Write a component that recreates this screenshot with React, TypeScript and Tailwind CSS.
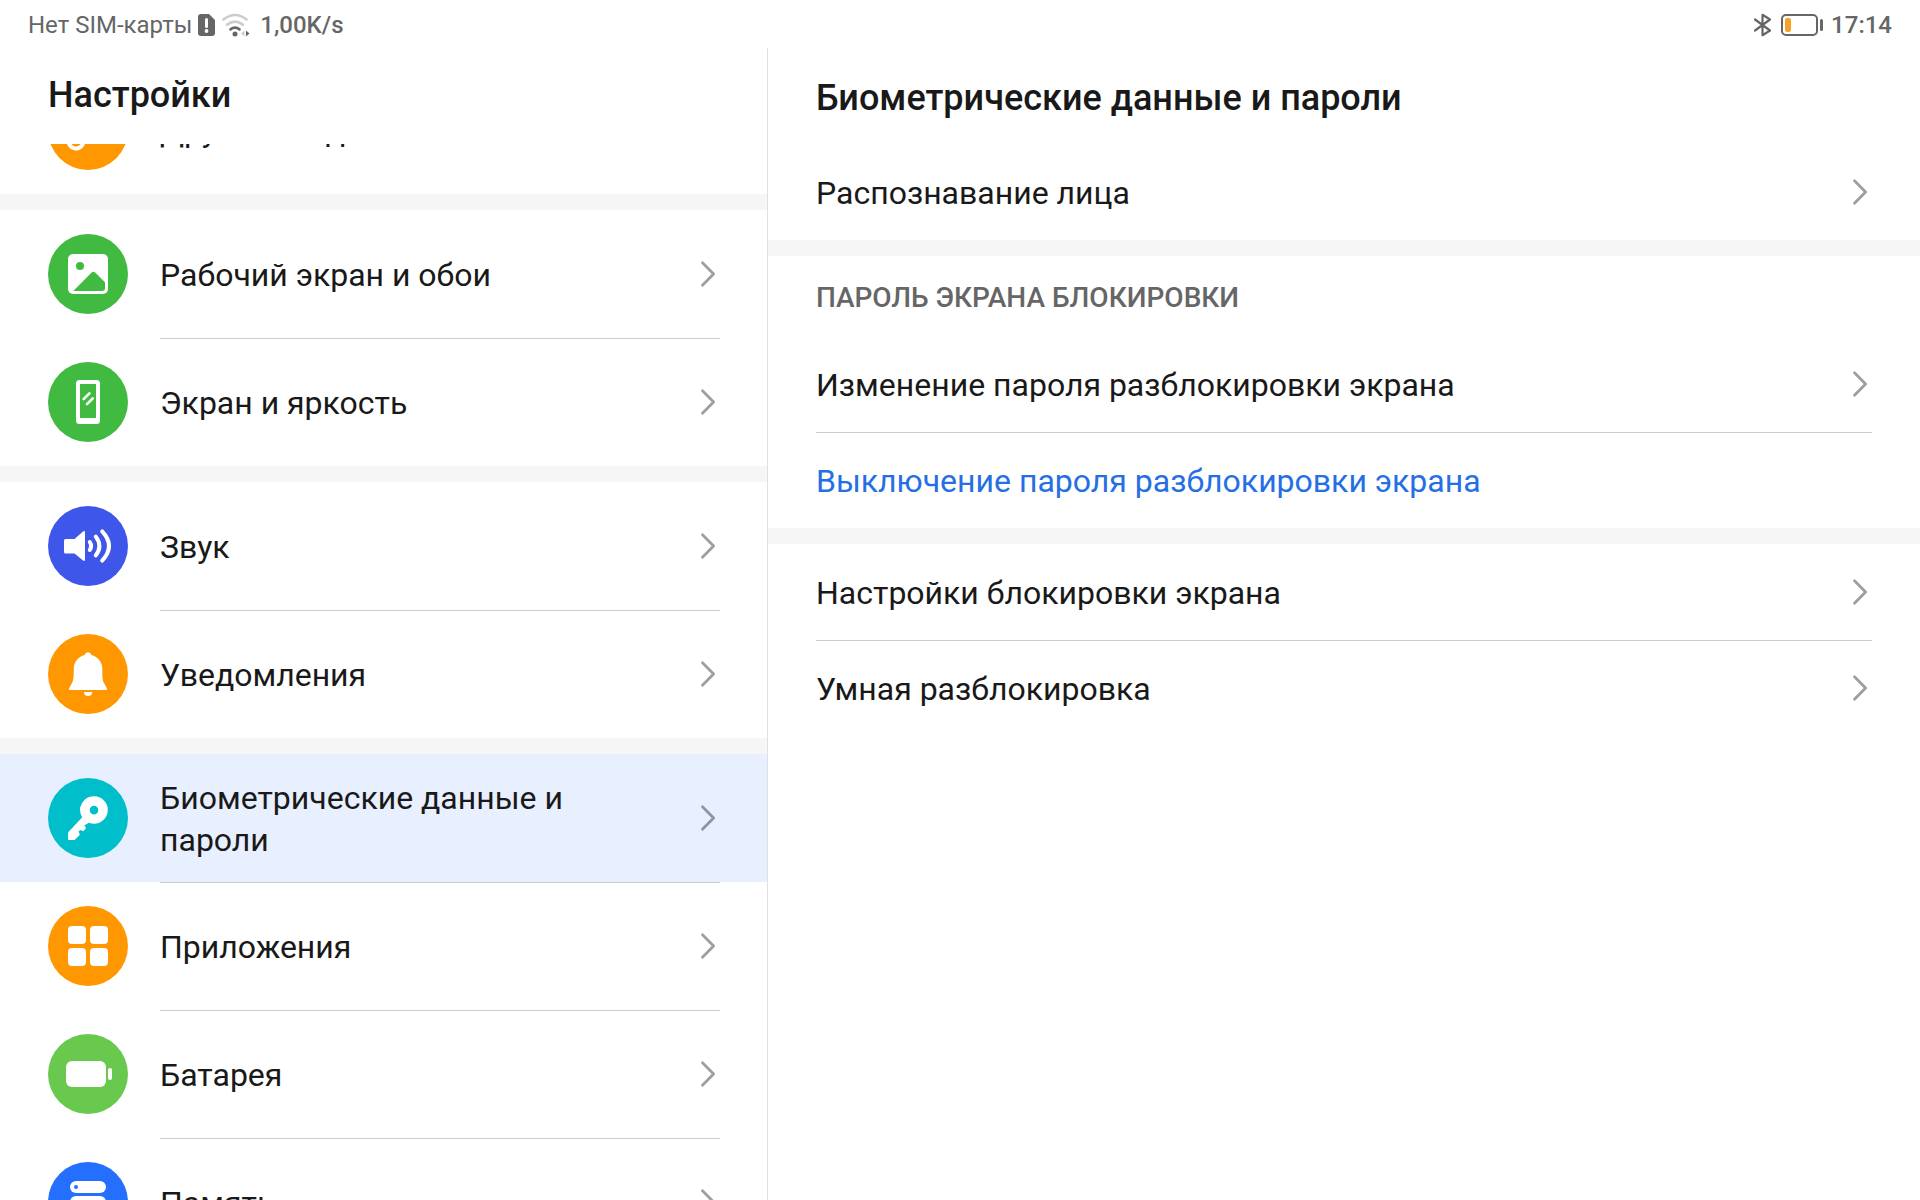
import React, { useLayoutEffect, useRef, useState } from 'react'

type MenuItem = {
  id: string
  title: string
  color: string
  icon: React.ReactNode
}

type DetailItem = {
  title: string
  isLink?: boolean
}

const MoreIcon = () => (
  <g fill="none" stroke="#fff" strokeWidth="4" strokeLinecap="round">
    <rect x="20.5" y="30.5" width="15" height="28" rx="7.5" transform="rotate(12 28 51)" />
    <path d="M42 44l10-10a7.5 7.5 0 0 0-11-11l-6 6" />
  </g>
)

const WallpaperIcon = () => (
  <g>
    <rect x="20" y="20" width="40" height="40" rx="5" fill="#fff" />
    <circle cx="32" cy="32" r="4" fill="#41ba41" />
    <path d="M25.3 57L43.4 38.7q2-1.8 4 0L57 48.3V54q0 3-3 3z" fill="#41ba41" />
  </g>
)

const DisplayIcon = () => (
  <g>
    <path fillRule="evenodd" fill="#fff" d="M31.5 18h17a3.5 3.5 0 0 1 3.5 3.5v37a3.5 3.5 0 0 1-3.5 3.5h-17a3.5 3.5 0 0 1-3.5-3.5v-37a3.5 3.5 0 0 1 3.5-3.5zM32 22v34h16V22z" />
    <path d="M35.6 37.2l5.8-5.8M39 42.2l5.8-5.8" stroke="#fff" strokeWidth="2.6" strokeLinecap="round" />
  </g>
)

const SoundIcon = () => (
  <g>
    <path fill="#fff" d="M17.5 33H26.5L35 25.4q2-1.2 2 1V53.6q0 2.2-2 1L26.5 47.4H17.5q-1.5 0-1.5-1.5V34.5q0-1.5 1.5-1.5z" />
    <g fill="none" stroke="#fff" strokeWidth="4" strokeLinecap="round">
      <path d="M41.8 36q2.600 4 0 8" />
      <path d="M47.8 30.600q7.200 9.400 0 18.800" />
      <path d="M54.200 25.400q13.600 14.600 0 29.200" />
    </g>
  </g>
)

const BellIcon = () => (
  <g fill="#fff">
    <path d="M36.6 20.9a3.5 3.5 0 0 1 6.8 0C50 22.7 54.3 28 54.3 34.5c0 9 .2 11.6 1.7 14.5l3 5.4q.4 1.6-1 1.6H22q-1.4 0-1-1.6l3-5.4c1.5-2.9 1.8-5.5 1.8-14.5C25.8 28 30 22.7 36.6 20.9z" />
    <path d="M36 58h8.2a4.1 4 0 0 1-8.2 0z" />
  </g>
)

const KeyIcon = () => (
  <path
    fill="#fff"
    fillRule="evenodd"
    d="M46 18.3a13.7 13.7 0 1 1-5 26.4L36.3 47.6l1.9 2.4-3 3.2-2.8-1.2-1.8 1.4 1.3 3.4L26.6 62H20.8q-.8 0-.8-.8V54.6L34.2 39.2A13.7 13.7 0 0 1 46 18.3zm0 9.5a4.3 4.3 0 1 0 0 8.6a4.3 4.3 0 1 0 0-8.6z"
  />
)

const AppsIcon = () => (
  <g fill="#fff">
    <rect x="20" y="20" width="18" height="18" rx="4" />
    <rect x="42" y="20" width="18" height="18" rx="4" />
    <rect x="20" y="42" width="18" height="18" rx="4" />
    <rect x="42" y="42" width="18" height="18" rx="4" />
  </g>
)

const BatteryIcon = () => (
  <g fill="#fff">
    <rect x="18" y="27" width="40" height="26" rx="6" />
    <rect x="60" y="34" width="4" height="12" rx="2" />
  </g>
)

const StorageIcon = () => (
  <g fill="#fff">
    <rect x="22" y="19" width="36" height="12" rx="6" />
    <rect x="22" y="34" width="36" height="12" rx="6" />
    <rect x="22" y="49" width="36" height="12" rx="6" />
    <circle cx="28" cy="25" r="2" fill="#256fff" />
    <circle cx="28" cy="40" r="2" fill="#256fff" />
    <circle cx="28" cy="55" r="2" fill="#256fff" />
  </g>
)

const menuGroups: MenuItem[][] = [
  [{ id: 'more', title: 'Другие соединения', color: '#ff9800', icon: <MoreIcon /> }],
  [
    { id: 'wallpaper', title: 'Рабочий экран и обои', color: '#41ba41', icon: <WallpaperIcon /> },
    { id: 'display', title: 'Экран и яркость', color: '#41ba41', icon: <DisplayIcon /> },
  ],
  [
    { id: 'sound', title: 'Звук', color: '#3f56ea', icon: <SoundIcon /> },
    { id: 'notifications', title: 'Уведомления', color: '#ff9800', icon: <BellIcon /> },
  ],
  [
    { id: 'biometrics', title: 'Биометрические данные и пароли', color: '#00bfcb', icon: <KeyIcon /> },
    { id: 'apps', title: 'Приложения', color: '#ff9800', icon: <AppsIcon /> },
    { id: 'battery', title: 'Батарея', color: '#69c94f', icon: <BatteryIcon /> },
    { id: 'storage', title: 'Память', color: '#256fff', icon: <StorageIcon /> },
  ],
]

const Chevron = () => (
  <svg width="24" height="32" viewBox="0 0 24 32" className="shrink-0" aria-hidden="true">
    <path d="M6.5 3.8L17.6 15L6.5 26.2" fill="none" stroke="#000" strokeOpacity="0.38" strokeWidth="2.8" strokeLinecap="round" strokeLinejoin="round" />
  </svg>
)

const StatusBar = () => {
  return (
    <header className="flex h-12 shrink-0 items-center justify-between px-7 pt-px text-2xl text-[#666666]">
      <div className="flex items-center">
        <span>Нет SIM-карты</span>
        <svg width="18" height="24" viewBox="0 0 18 24" className="ml-1.5" aria-hidden="true">
          <path d="M3 1h8l6 6v13a3 3 0 0 1-3 3H3a3 3 0 0 1-3-3V4a3 3 0 0 1 3-3z" fill="#666" />
          <path d="M8.5 6.5v7" stroke="#fff" strokeWidth="3" strokeLinecap="round" />
          <circle cx="8.5" cy="18" r="1.9" fill="#fff" />
        </svg>
        <svg width="28" height="24" viewBox="0 0 28 24" className="ml-1.5" aria-hidden="true">
          <g fill="none" strokeWidth="2.6" strokeLinecap="round">
            <path d="M1.5 6.5Q13 -2.5 24.5 6.5" stroke="#ccc" />
            <path d="M5 11.7Q13 5.5 21 11.7" stroke="#ccc" />
            <path d="M8.5 16.4Q13 13 17.5 16.4" stroke="#666" />
          </g>
          <circle cx="13" cy="21" r="2.5" fill="#666" />
          <path d="M22.5 17.5v6l-3.500-3z" fill="#ccc" />
          <path d="M24 17.5v6l3.500-3z" fill="#666" />
        </svg>
        <span className="ml-2.5 font-medium">1,00K/s</span>
      </div>
      <div className="flex items-center">
        <svg width="20" height="24" viewBox="0 0 20 24" className="mr-2" aria-hidden="true">
          <path d="M2 6.5L17 17.5L9.5 22.2V1.8L17 6.5L2 17.5" fill="none" stroke="#666" strokeWidth="2.2" strokeLinecap="round" strokeLinejoin="round" />
        </svg>
        <svg width="42" height="24" viewBox="0 0 42 24" className="mr-2" aria-hidden="true">
          <rect x="1" y="2" width="35" height="20" rx="4" fill="none" stroke="#666" strokeWidth="2" />
          <rect x="4" y="5" width="6" height="14" rx="2" fill="#f9a22b" />
          <rect x="39" y="6" width="3" height="12" rx="1.5" fill="#666" />
        </svg>
        <span className="font-medium">17:14</span>
      </div>
    </header>
  )
}

const MenuRow = ({ item, first, selected, onSelect }: { item: MenuItem, first: boolean, selected: boolean, onSelect: () => void }) => {
  return (
    <button
      type="button"
      onClick={onSelect}
      className={`flex h-32 w-full items-center gap-8 pr-[47px] pl-12 text-left ${selected ? 'bg-[#e8efff]' : ''}`}
    >
      <svg width="80" height="80" viewBox="0 0 80 80" className="shrink-0" aria-hidden="true">
        <circle cx="40" cy="40" r="40" fill={item.color} />
        {item.icon}
      </svg>
      <span className={`flex h-full flex-1 items-center justify-between border-t ${first ? 'border-transparent' : 'border-[#cccccc]'}`}>
        <span className="max-w-110 text-[32px] leading-[42px]">{item.title}</span>
        <Chevron />
      </span>
    </button>
  )
}

const Sidebar = () => {
  const listRef = useRef<HTMLElement>(null)
  const [current, setCurrent] = useState('biometrics')

  useLayoutEffect(() => {
    if (listRef.current) {
      listRef.current.scrollTop = 78
    }
  }, [])

  return (
    <aside className="flex w-2/5 flex-col border-r border-[#e0e0e0]">
      <h1 className="flex h-24 shrink-0 items-center px-12 pb-0.5 text-4xl font-medium">Настройки</h1>
      <nav ref={listRef} className="min-h-0 flex-1 overflow-y-auto [scrollbar-width:none]">
        {menuGroups.map((group, index) => (
          <div key={index} className={index > 0 ? 'border-t-16 border-[#f6f6f6]' : ''}>
            {group.map((item, i) => (
              <MenuRow
                key={item.id}
                item={item}
                first={i === 0}
                selected={current === item.id}
                onSelect={() => setCurrent(item.id)}
              />
            ))}
          </div>
        ))}
      </nav>
    </aside>
  )
}

const DetailGroup = ({ heading, items }: { heading?: string, items: DetailItem[] }) => {
  return (
    <section className="border-b-16 border-[#f6f6f6] px-12 last:border-b-0">
      {heading && (
        <h3 className="flex h-20 items-center pt-1 text-[28px] font-medium text-[#666666]">{heading}</h3>
      )}
      {items.map((item, i) => (
        <button
          type="button"
          key={item.title}
          className={`flex h-24 w-full items-center justify-between border-t text-left text-[32px] ${i === 0 ? 'border-transparent' : 'border-[#cccccc]'} ${item.isLink ? 'text-[#256fe5]' : ''}`}
        >
          <span>{item.title}</span>
          {!item.isLink && <Chevron />}
        </button>
      ))}
    </section>
  )
}

const App = () => {
  return (
    <div className="flex h-screen flex-col overflow-hidden bg-white font-['Roboto',sans-serif] text-[#191919]">
      <StatusBar />
      <div className="flex min-h-0 flex-1">
        <Sidebar />
        <main className="flex-1 overflow-y-auto">
          <h2 className="flex h-24 items-center px-12 pt-1 text-4xl font-medium">Биометрические данные и пароли</h2>
          <DetailGroup items={[{ title: 'Распознавание лица' }]} />
          <DetailGroup
            heading="ПАРОЛЬ ЭКРАНА БЛОКИРОВКИ"
            items={[
              { title: 'Изменение пароля разблокировки экрана' },
              { title: 'Выключение пароля разблокировки экрана', isLink: true },
            ]}
          />
          <DetailGroup
            items={[
              { title: 'Настройки блокировки экрана' },
              { title: 'Умная разблокировка' },
            ]}
          />
        </main>
      </div>
    </div>
  )
}

export default App
